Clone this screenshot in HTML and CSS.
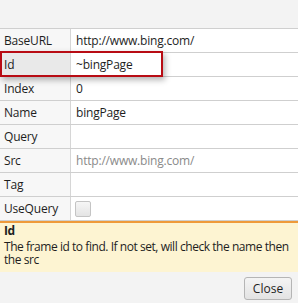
FILE: index.html
```html
<!DOCTYPE html>
<html lang="en">
<head>
  <meta charset="UTF-8" />
  <title>Frame properties</title>
  <link rel="stylesheet" href="styles.css">
</head>
<body>
  <div class="dialog">
    <div class="top-bar"></div>

    <div class="grid-wrap">
      <div class="prop-grid">
        <div class="row"><div class="label">BaseURL</div><div class="value">http://www.bing.com/</div></div>
        <div class="row selected"><div class="label">Id</div><div class="value">~bingPage</div></div>
        <div class="row"><div class="label">Index</div><div class="value">0</div></div>
        <div class="row"><div class="label">Name</div><div class="value">bingPage</div></div>
        <div class="row"><div class="label">Query</div><div class="value"></div></div>
        <div class="row"><div class="label">Src</div><div class="value muted">http://www.bing.com/</div></div>
        <div class="row"><div class="label">Tag</div><div class="value"></div></div>
        <div class="row"><div class="label">UseQuery</div><div class="value"><span class="checkbox"></span></div></div>
      </div>
      <!-- highlight around the selected row -->
      <div class="highlight"></div>
    </div>

    <div class="description">
      <div class="desc-title">Id</div>
      <div class="desc-text">The frame id to find. If not set, will check the name then the src</div>
    </div>

    <div class="footer">
      <button class="close-btn">Close</button>
    </div>
  </div>
</body>
</html>
```

FILE: styles.css
```css
body {
  margin: 0;
  font-family: "Open Sans", "Noto Sans", sans-serif;
  font-size: 12px;
  color: #1e1e1e;
  background: #f3f3f3;
}

.dialog {
  width: 298px;
  height: 303px;
  display: flex;
  flex-direction: column;
}

.top-bar {
  height: 28px;
  background: #f3f3f3;
  border-bottom: 1px solid #cfcfcf;
}

.grid-wrap {
  position: relative;
  background: #fff;
}

.row {
  display: flex;
  height: 23px;
  border-bottom: 1px solid #cfcfcf;
  letter-spacing: -0.2px;
}

.label {
  width: 66px;
  padding-left: 4px;
  background: #f7f7f7;
  border-right: 1px solid #d6d6d6;
  display: flex;
  align-items: center;
}

.selected .label {
  background: #e9e9e9;
}

.value {
  flex: 1;
  padding-left: 5px;
  display: flex;
  align-items: center;
}

.muted {
  color: #8a8a8a;
}

.checkbox {
  width: 14px;
  height: 14px;
  border: 1px solid #c4c4c4;
  border-radius: 2px;
  background: linear-gradient(#f6f6f6, #e4e4e4);
  margin-left: -1px;
}

.highlight {
  position: absolute;
  left: 0;
  top: 22px;
  width: 159px;
  height: 22px;
  border: 2px solid #b80c14;
  box-shadow: 2px 3px 6px rgba(0,0,0,0.3);
}

.description {
  border-top: 2px solid #ee9a3a;
  background: #fdf4d2;
  padding: 1px 0 7px 4px;
  height: 41px;
  line-height: 13px;
  letter-spacing: -0.45px;
}

.desc-title {
  font-weight: bold;
  margin-bottom: 3px;
}

.footer {
  flex: 1;
  display: flex;
  justify-content: flex-end;
  align-items: flex-start;
  padding: 5px 6px 0 0;
}

.close-btn {
  font-family: inherit;
  font-size: 12px;
  color: #1e1e1e;
  width: 48px;
  height: 23px;
  padding: 0;
  border: 1px solid #b5b5b5;
  border-radius: 3px;
  background: linear-gradient(#f4f4f4, #e3e3e3);
}
```
